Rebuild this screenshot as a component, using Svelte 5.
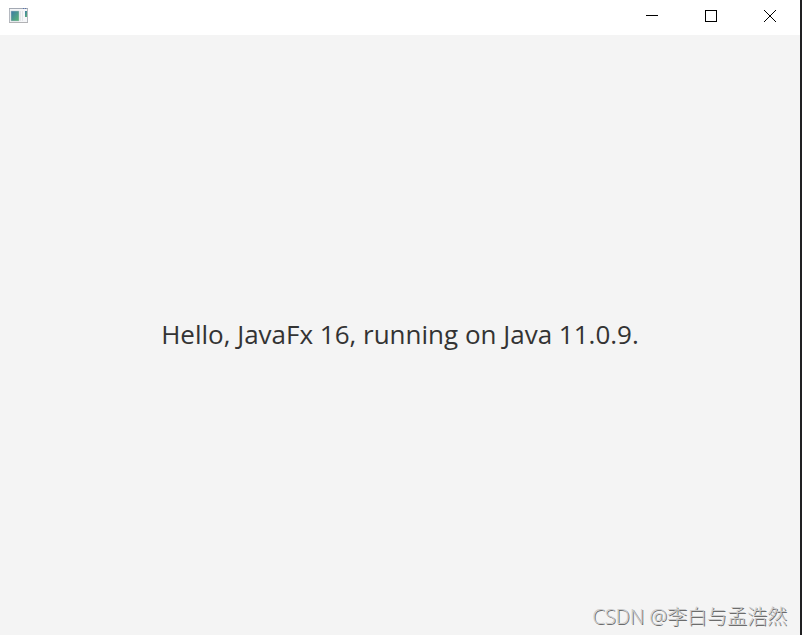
<script lang="ts">
  const javafxVersion = "16";
  const javaVersion = "11.0.9";
</script>

<div class="window">
  <header class="title-bar">
    <svg class="app-icon" width="20" height="16" viewBox="0 0 20 16" aria-hidden="true">
      <defs>
        <linearGradient id="pane" x1="0" y1="0" x2="1" y2="1">
          <stop offset="0" stop-color="#3d78a8" />
          <stop offset="1" stop-color="#5bb974" />
        </linearGradient>
      </defs>
      <rect x="0.5" y="0.5" width="18" height="14" fill="#f5f6f8" stroke="#b5b9c0" />
      <path d="M0 0.5h19" stroke="#a3a9b3" />
      <path d="M14 0.5h1M16 0.5h1" stroke="#5874b0" />
      <rect x="2" y="3" width="8" height="10" fill="url(#pane)" stroke="#b9c2c8" stroke-width="0.5" />
      <path d="M11.5 3v10M13.5 3v10" stroke="#e3e5e8" />
      <rect x="16" y="3" width="2" height="6" fill="url(#pane)" />
      <path d="M0 14.5h19" stroke="#b2b2b5" />
    </svg>
    <div class="controls">
      <button aria-label="Minimize">
        <svg width="12" height="12" viewBox="0 0 12 12" shape-rendering="crispEdges">
          <path d="M0 5.5h12" />
        </svg>
      </button>
      <button aria-label="Maximize">
        <svg width="12" height="12" viewBox="0 0 12 12" shape-rendering="crispEdges">
          <rect x="0.5" y="0.5" width="11" height="11" />
        </svg>
      </button>
      <button aria-label="Close">
        <svg width="12" height="12" viewBox="0 0 12 12">
          <path d="M0 0l12 12M12 0L0 12" />
        </svg>
      </button>
    </div>
  </header>
  <main class="scene">
    <p class="message">Hello, JavaFx {javafxVersion}, running on Java {javaVersion}.</p>
    <span class="watermark">CSDN @李白与孟浩然</span>
  </main>
</div>

<style>
  :global(body) {
    margin: 0;
    background: #f4f4f4;
  }

  .window {
    display: flex;
    flex-direction: column;
    box-sizing: border-box;
    min-height: 100vh;
    border-right: 2px solid #202022;
    font-family: "Open Sans", "Noto Sans CJK SC", sans-serif;
  }

  .title-bar {
    display: flex;
    align-items: center;
    justify-content: space-between;
    height: 35px;
    padding-left: 9px;
    background: #fff;
  }

  .app-icon {
    margin-bottom: 3px;
  }

  .controls {
    display: flex;
    align-self: flex-start;
    height: 32px;
    padding-right: 1px;
  }

  button {
    display: flex;
    align-items: center;
    justify-content: center;
    width: 59px;
    padding: 0;
    border: none;
    background: transparent;
  }

  button:hover {
    background: #e5e5e5;
  }

  button svg {
    fill: none;
    stroke: #000;
    stroke-width: 1;
  }

  .scene {
    position: relative;
    display: flex;
    flex: 1;
    align-items: center;
    justify-content: center;
    padding-bottom: 2px;
    background: #f4f4f4;
  }

  .message {
    margin: 0;
    color: #333;
    font-size: 26px;
    line-height: 36px;
  }

  .watermark {
    position: absolute;
    right: 13px;
    bottom: 4px;
    color: #ccc;
    font-size: 20px;
    font-weight: 300;
    line-height: 28px;
    text-shadow: 1px 1px 0 #6c6c6c;
  }
</style>
